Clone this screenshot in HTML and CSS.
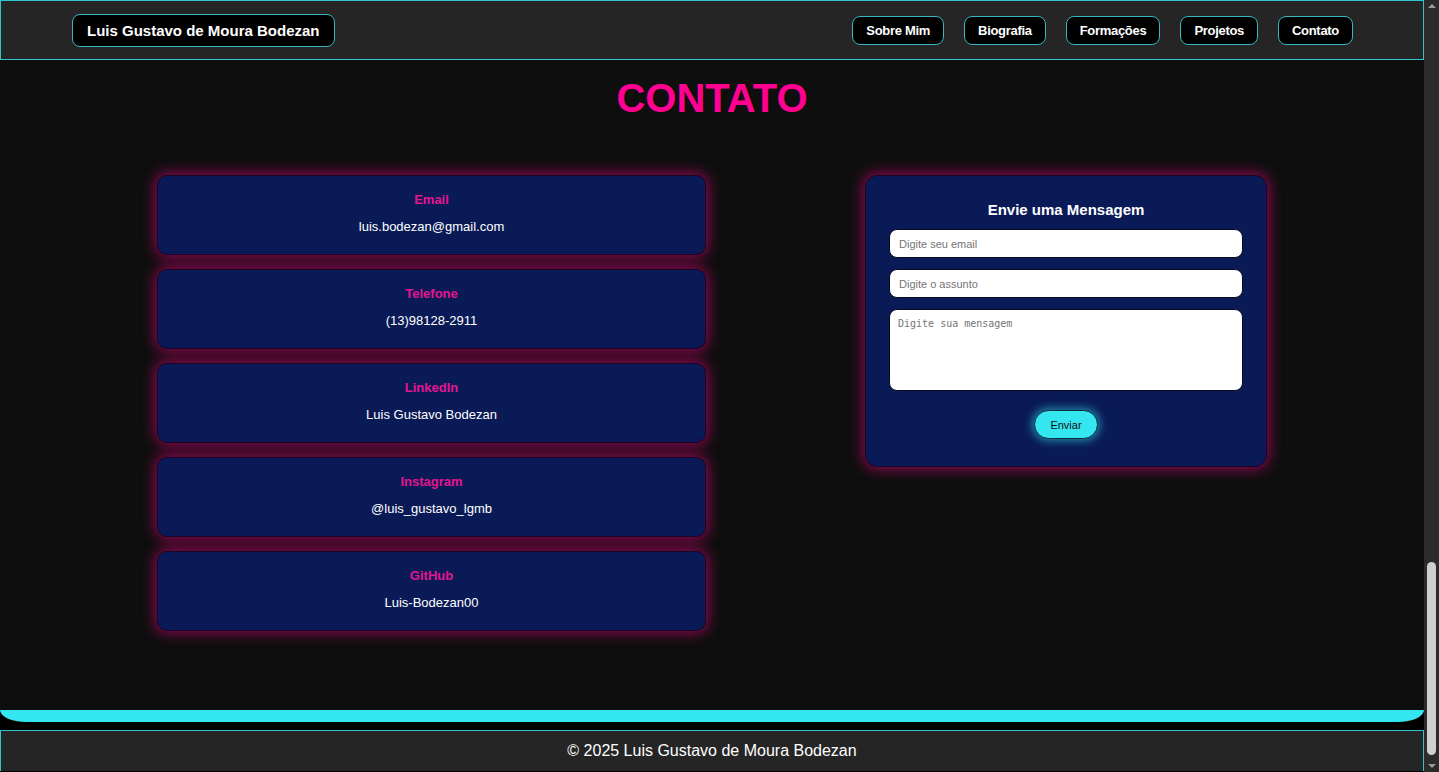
FILE: index.html
```html
<!DOCTYPE html>
<html lang="pt-BR">
<head>
<meta charset="utf-8">
<title>Contato - Luis Gustavo de Moura Bodezan</title>
<link rel="stylesheet" href="styles.css">
</head>
<body>
<div class="page">
  <header class="topbar">
    <a class="brand" href="#">Luis Gustavo de Moura Bodezan</a>
    <nav class="nav">
      <a class="nav-btn" href="#">Sobre Mim</a>
      <a class="nav-btn" href="#">Biografia</a>
      <a class="nav-btn" href="#">Formações</a>
      <a class="nav-btn" href="#">Projetos</a>
      <a class="nav-btn" href="#">Contato</a>
    </nav>
  </header>
  <main class="contact">
    <h1 class="contact-title">CONTATO</h1>
    <div class="contact-grid">
      <div class="info-list">
        <div class="info-card"><div class="info-label">Email</div><div class="info-value">luis.bodezan@gmail.com</div></div>
        <div class="info-card"><div class="info-label">Telefone</div><div class="info-value">(13)98128-2911</div></div>
        <div class="info-card"><div class="info-label">LinkedIn</div><div class="info-value">Luis Gustavo Bodezan</div></div>
        <div class="info-card"><div class="info-label">Instagram</div><div class="info-value">@luis_gustavo_lgmb</div></div>
        <div class="info-card"><div class="info-label">GitHub</div><div class="info-value">Luis-Bodezan00</div></div>
      </div>
      <form class="form-card">
        <h3 class="form-title">Envie uma Mensagem</h3>
        <input class="field" type="email" placeholder="Digite seu email">
        <input class="field" type="text" placeholder="Digite o assunto">
        <textarea class="field area" placeholder="Digite sua mensagem"></textarea>
        <button class="send" type="button">Enviar</button>
      </form>
    </div>
  </main>
  <footer class="footer">© 2025 Luis Gustavo de Moura Bodezan</footer>
</div>
<div class="scrollbar" aria-hidden="true">
  <div class="sb-btn"><span class="sb-up"></span></div>
  <div class="sb-track"><div class="sb-thumb"></div></div>
  <div class="sb-btn"><span class="sb-down"></span></div>
</div>
</body>
</html>
```
FILE: styles.css
```css
body {
  margin: 0;
  background: #000;
  font-family: "Liberation Sans", Arial, sans-serif;
  color: #fff;
  display: flex;
  height: 772px;
  overflow: hidden;
}
.page {
  flex: 1;
  min-width: 0;
}
.scrollbar {
  width: 15px;
  flex: none;
  background: #2b2b2b;
  display: flex;
  flex-direction: column;
}
.sb-btn {
  height: 15px;
  display: flex;
  align-items: center;
  justify-content: center;
}
.sb-up {
  width: 0;
  height: 0;
  border-left: 4px solid transparent;
  border-right: 4px solid transparent;
  border-bottom: 4px solid #9a9a9a;
  margin-top: -3px;
}
.sb-down {
  width: 0;
  height: 0;
  border-left: 4px solid transparent;
  border-right: 4px solid transparent;
  border-top: 4px solid #9a9a9a;
  margin-top: 3px;
}
.sb-track {
  flex: 1;
  display: flex;
  flex-direction: column;
  justify-content: flex-end;
  align-items: center;
  padding-bottom: 2px;
}
.sb-thumb {
  width: 9px;
  height: 193px;
  border-radius: 5px;
  background: #cfcfcf;
}
.topbar {
  height: 58px;
  border: 1px solid #2fc3cc;
  background: #252525;
  display: flex;
  align-items: center;
  justify-content: space-between;
  padding: 0 70px 0 71px;
}
.brand {
  display: block;
  background: #000;
  color: #fff;
  text-decoration: none;
  font-weight: bold;
  font-size: 15px;
  line-height: 15px;
  padding: 8px 14px;
  border: 1px solid #36b7bf;
  border-radius: 8px;
}
.nav {
  display: flex;
  gap: 20px;
}
.nav-btn {
  display: block;
  background: #000;
  color: #fff;
  text-decoration: none;
  font-weight: bold;
  font-size: 13px;
  letter-spacing: -0.3px;
  line-height: 15px;
  padding: 6px 13px;
  border: 1px solid #36b7bf;
  border-radius: 8px;
}
.contact {
  background: #0e0e0e;
  height: 650px;
  border-bottom: 12px solid #33e6f0;
  border-radius: 0 0 26px 26px / 0 0 12px 12px;
  overflow: hidden;
}
.contact-title {
  margin: 15px 0 0;
  text-align: center;
  color: #ff0090;
  font-size: 40px;
  line-height: 46px;
  font-weight: bold;
}
.contact-grid {
  width: 1110px;
  margin: 54px auto 0;
  display: flex;
  justify-content: space-between;
  align-items: flex-start;
}
.info-list {
  width: 549px;
  display: flex;
  flex-direction: column;
  gap: 14px;
}
.info-card {
  box-sizing: border-box;
  height: 80px;
  background: #0a1a56;
  border: 1px solid #1a0522;
  border-radius: 10px;
  box-shadow: 0 0 14px 2px rgba(255, 0, 144, 0.55);
  display: flex;
  flex-direction: column;
  align-items: center;
  padding-top: 16px;
}
.info-label {
  color: #e3168f;
  font-weight: bold;
  font-size: 13px;
  line-height: 16px;
}
.info-value {
  margin-top: 11px;
  font-size: 13px;
  line-height: 16px;
}
.form-card {
  box-sizing: border-box;
  width: 402px;
  height: 292px;
  background: #0a1a56;
  border: 1px solid #1a0522;
  border-radius: 12px;
  box-shadow: 0 0 14px 2px rgba(255, 0, 144, 0.55);
  padding: 25px 23px 0;
  display: flex;
  flex-direction: column;
  align-items: stretch;
}
.form-title {
  margin: 0 0 11px;
  text-align: center;
  font-size: 15px;
  line-height: 17px;
  font-weight: bold;
}
.field {
  box-sizing: border-box;
  height: 29px;
  margin: 0 0 11px;
  border: 1px solid #0a0a1e;
  border-radius: 8px;
  background: #fff;
  padding: 0 9px;
  font-family: "Liberation Sans", Arial, sans-serif;
  font-size: 11px;
  color: #222;
  outline: none;
}
.field::placeholder {
  color: #757575;
}
.area {
  height: 82px;
  padding: 8px 8px;
  resize: none;
  font-family: "DejaVu Sans Mono", "Liberation Mono", monospace;
  font-size: 10px;
  margin-bottom: 19px;
}
.send {
  align-self: center;
  width: 64px;
  height: 29px;
  background: #33e6f0;
  color: #111;
  border: 1px solid #0b2a3a;
  border-radius: 15px;
  font-family: "Liberation Sans", Arial, sans-serif;
  font-size: 11px;
  padding: 0;
  box-shadow: 0 0 8px 2px rgba(51, 230, 240, 0.55);
}
.footer {
  margin-top: 8px;
  border: 1px solid #2fc3cc;
  border-bottom: none;
  background: #252525;
  text-align: center;
  font-size: 16px;
  line-height: 18px;
  padding: 11px 0 11px;
}
```
